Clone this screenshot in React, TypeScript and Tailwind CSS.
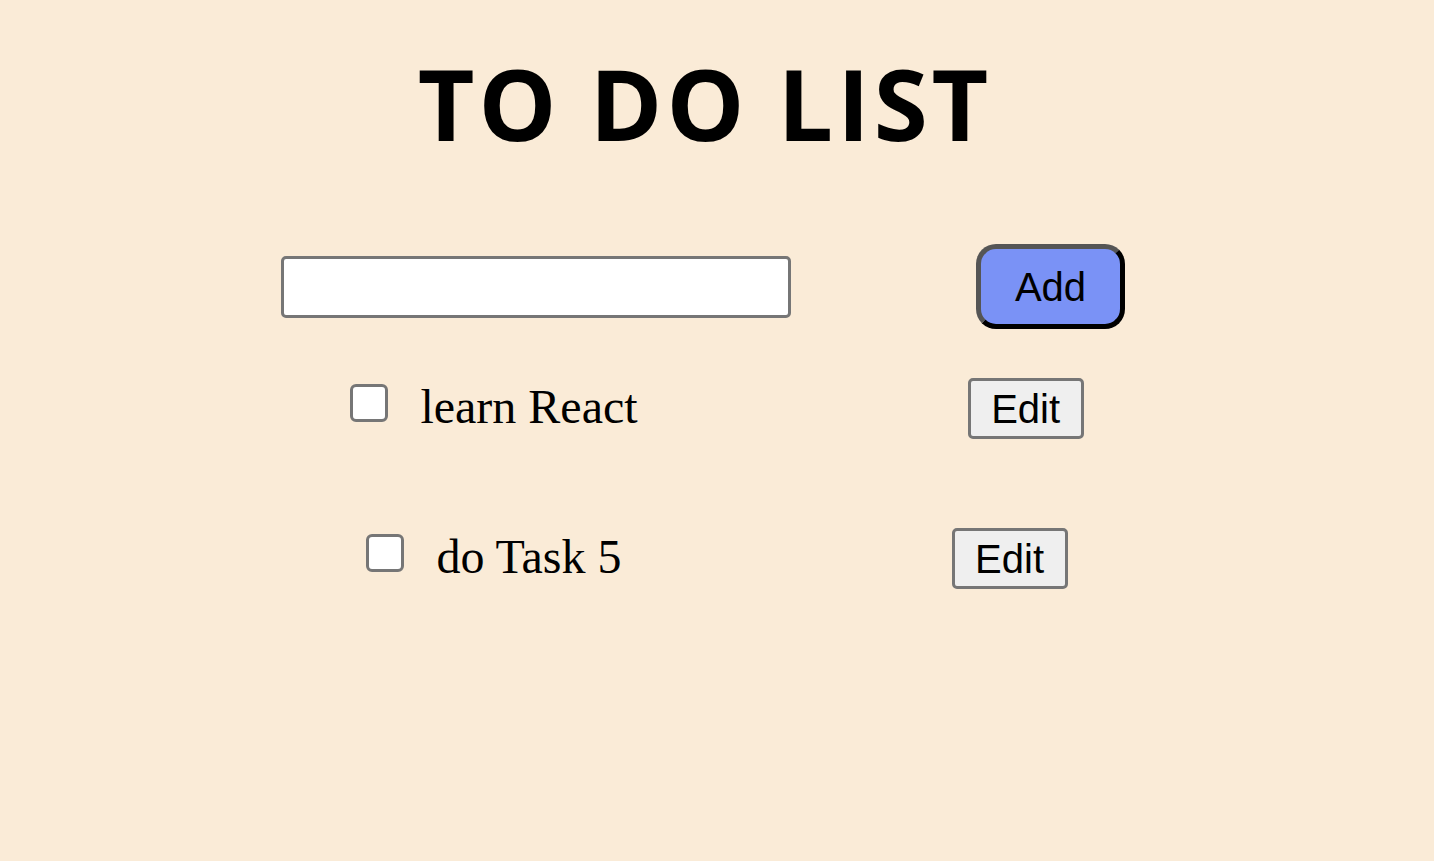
import React from "react";

function Row({ text }: { text: string }) {
  return (
    <div className="flex items-start justify-center h-[61px]">
      <span className="mt-[6px] block w-[38px] h-[38px] rounded-[6px] border-[3px] border-[#767676] bg-white" />
      <span
        className="ml-[32px] mt-[-7px] text-[48px] leading-normal text-black whitespace-nowrap"
        style={{ fontFamily: '"Liberation Serif", "Times New Roman", serif' }}
      >
        {text}
      </span>
      <button
        className="ml-[330px] w-[116px] h-[61px] rounded-[5px] border-[3px] border-[#767676] bg-[#efefef] text-[40px] leading-normal text-black flex items-center justify-center"
        style={{ fontFamily: '"Liberation Sans", Arial, sans-serif' }}
      >
        Edit
      </button>
    </div>
  );
}

export default function App() {
  return (
    <div className="min-h-[861px] w-full bg-[#faebd7] flex flex-col items-center">
      <h1
        className="mt-[55px] mr-[24px] text-[98px] leading-[96px] font-bold tracking-[4px] text-black"
        style={{ fontFamily: '"Open Sans", "Noto Sans", sans-serif' }}
      >
        TO DO LIST
      </h1>
      <div className="mt-[93px] mr-[28px] flex items-center">
        <div className="w-[510px] h-[62px] rounded-[5px] border-[3px] border-[#767676] bg-white" />
        <button
          className="ml-[185px] w-[149px] h-[85px] rounded-[20px] border-[5px] border-t-[#555555] border-l-[#555555] border-b-black border-r-black bg-[#7a92f6] text-[40px] leading-normal text-black flex items-center justify-center"
          style={{ fontFamily: '"Liberation Sans", Arial, sans-serif' }}
        >
          Add
        </button>
      </div>
      <div className="mt-[49px] flex flex-col gap-[89px]">
        <Row text="learn React" />
        <Row text="do Task 5" />
      </div>
    </div>
  );
}
